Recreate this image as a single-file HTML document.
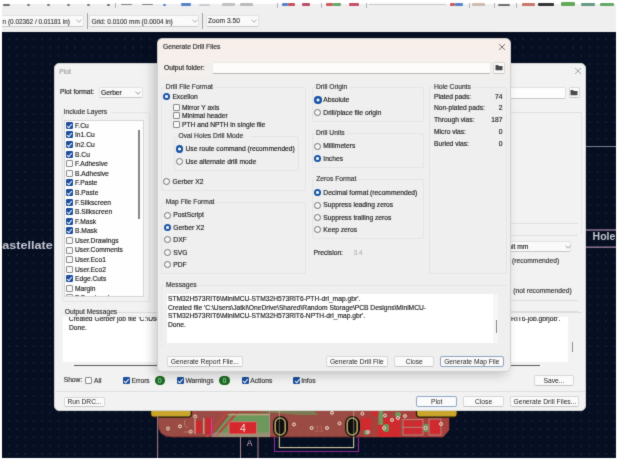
<!DOCTYPE html>
<html><head><meta charset="utf-8">
<style>
*{box-sizing:border-box}
html,body{margin:0;padding:0}
body{width:619px;height:460px;overflow:hidden;background:#fff;position:relative;font-family:"Liberation Sans",sans-serif}
.a{position:absolute}
.t{position:absolute;font-size:6.7px;line-height:7px;color:#1c1c1c;-webkit-text-stroke:0.15px currentColor;white-space:nowrap}
#tb{left:2px;top:3.5px;width:614px;height:28.5px;background:#efefef}
#cv{left:2px;top:32px;width:614px;height:426px;background-color:#050f21;
 background-image:radial-gradient(circle at 1px 1px, rgba(120,135,160,.18) 0.5px, rgba(0,0,0,0) 1.1px);
 background-size:8.31px 8.31px;background-position:5.75px 6.2px}
#plot{left:53.7px;top:62.5px;width:532.4px;height:348.7px;background:#f2f2f2;border-radius:5px;border:1px solid #d5d5d5}
#drill{left:157px;top:38px;width:353.5px;height:333.5px;background:linear-gradient(#f8eeea 0px,#f6efeb 22px,#f2efed 36px,#efefef 44px);border-radius:5px;border:1px solid #d0d0d0;box-shadow:-4px 3px 11px rgba(0,0,0,.2)}
.dd{position:absolute;background:#fafafa;border:1px solid #e2e2e2;border-bottom-color:#c8c8c8;border-radius:2px}
.btn{position:absolute;background:#fbfbfb;border:1px solid #d8d8d8;border-bottom-color:#c4c4c4;border-radius:2px;font-size:6.7px;text-align:center;color:#1e1e1e;white-space:nowrap}
.gb{position:absolute;border:1px solid #e4e4e4;border-radius:2px}
.rb{position:absolute;width:7px;height:7px;border-radius:50%;border:0.8px solid #6f6f6f;background:#f6f6f6}
.rs{position:absolute;width:7.4px;height:7.4px;border-radius:50%;background:radial-gradient(circle at 50% 50%,#f4fbff 0,#e8f6ff 1.2px,#1a52a0 1.9px,#1450a8 3.7px)}
.cb{position:absolute;width:7px;height:7px;border-radius:1px;border:0.8px solid #8a8a8a;background:#f9f9f9}
.cc{position:absolute;width:7px;height:7px;border-radius:1.2px;background:#1c4e9c}
.cc:after{content:"";position:absolute;left:2.3px;top:0.9px;width:2px;height:3.6px;border:solid #fff;border-width:0 0.9px 0.9px 0;transform:rotate(40deg)}
.badge{position:absolute;width:10.5px;height:9px;border-radius:4.5px;background:#176a20;color:#c8e8c8;font-size:7px;line-height:9px;text-align:center}
</style></head><body><svg width="0" height="0" style="position:absolute"><filter id="sb" x="0" y="0" width="100%" height="100%" color-interpolation-filters="sRGB"><feConvolveMatrix order="3" kernelMatrix="0.02 0.08 0.02 0.08 0.6 0.08 0.02 0.08 0.02" edgeMode="duplicate"/></filter></svg><div id="root" style="position:absolute;left:0;top:0;width:619px;height:460px;overflow:hidden;filter:url(#sb)">
<div id="tb" class="a"></div><div class="a" style="left:3px;top:3.5px;width:7px;height:2px;background:#555;border-radius:1px;opacity:.85"></div><div class="a" style="left:27px;top:4px;width:3px;height:1.8px;background:#666;border-radius:1px;opacity:.85"></div><div class="a" style="left:47px;top:4px;width:3px;height:1.8px;background:#666;border-radius:1px;opacity:.85"></div><div class="a" style="left:67px;top:4px;width:3px;height:1.8px;background:#666;border-radius:1px;opacity:.85"></div><div class="a" style="left:87px;top:4px;width:3px;height:1.8px;background:#666;border-radius:1px;opacity:.85"></div><div class="a" style="left:107px;top:4px;width:3px;height:1.8px;background:#555;border-radius:1px;opacity:.85"></div><div class="a" style="left:121px;top:4px;width:11px;height:1.3px;background:#6a6a6a;border-radius:1px;opacity:.85"></div><div class="a" style="left:142px;top:4px;width:11px;height:1.3px;background:#6a6a6a;border-radius:1px;opacity:.85"></div><div class="a" style="left:163px;top:3.5px;width:3px;height:2px;background:#3a6fc0;border-radius:1px;opacity:.85"></div><div class="a" style="left:181px;top:3px;width:10px;height:2.8px;background:#3a6fc0;border-radius:1px;opacity:.85"></div><div class="a" style="left:199px;top:3.5px;width:11px;height:2px;background:#c4c4d0;border-radius:1px;opacity:.85"></div><div class="a" style="left:222px;top:3px;width:13px;height:2.5px;background:#b8b8b8;border-radius:1px;opacity:.85"></div><div class="a" style="left:240px;top:3px;width:13px;height:2.5px;background:#b0b0b0;border-radius:1px;opacity:.85"></div><div class="a" style="left:282px;top:2.5px;width:6px;height:3.5px;background:#3a6fc0;border-radius:1px;opacity:.85"></div><div class="a" style="left:288px;top:2.5px;width:7px;height:3.5px;background:#c03040;border-radius:1px;opacity:.85"></div><div class="a" style="left:302px;top:2.5px;width:8px;height:3.5px;background:#b03050;border-radius:1px;opacity:.85"></div><div class="a" style="left:326px;top:2.5px;width:7px;height:3.5px;background:#c04040;border-radius:1px;opacity:.85"></div><div class="a" style="left:333px;top:2.5px;width:8px;height:3.5px;background:#4a9a50;border-radius:1px;opacity:.85"></div><div class="a" style="left:349px;top:2.5px;width:10px;height:3.5px;background:#c03050;border-radius:1px;opacity:.85"></div><div class="a" style="left:450px;top:2.5px;width:5px;height:3.5px;background:#c04040;border-radius:1px;opacity:.85"></div><div class="a" style="left:455px;top:2.5px;width:8px;height:3.5px;background:#3a6fc0;border-radius:1px;opacity:.85"></div><div class="a" style="left:472px;top:2.5px;width:13px;height:3.5px;background:#c8b0a0;border-radius:1px;opacity:.85"></div><div class="a" style="left:498px;top:3.5px;width:12px;height:2.5px;background:#555;border-radius:1px;opacity:.85"></div><div class="a" style="left:522px;top:2.5px;width:13px;height:3.5px;background:#c06050;border-radius:1px;opacity:.85"></div><div class="a" style="left:538px;top:2.8px;width:16px;height:3.6px;background:#111;border-radius:1px;opacity:.85"></div><div class="a" style="left:561px;top:2.3px;width:13.5px;height:4px;background:#4a9a40;border-radius:1px;opacity:.85"></div><div class="a" style="left:581px;top:2.5px;width:14px;height:3.8px;background:#4a8a70;border-radius:1px;opacity:.85"></div><div class="a" style="left:600px;top:2.5px;width:14px;height:3.8px;background:#4a9a50;border-radius:1px;opacity:.85"></div><div class="a" style="left:115px;top:3px;width:0.7000000000000028px;height:5px;background:#b5b5b5"></div><div class="a" style="left:276.6px;top:3px;width:0.6999999999999886px;height:5px;background:#b5b5b5"></div><div class="a" style="left:320.7px;top:3px;width:0.6999999999999886px;height:5px;background:#b5b5b5"></div><div class="a" style="left:366px;top:3px;width:0.6999999999999886px;height:5px;background:#b5b5b5"></div><div class="a" style="left:469px;top:3px;width:0.6999999999999886px;height:5px;background:#b5b5b5"></div><div class="a" style="left:493.7px;top:3px;width:0.6999999999999886px;height:5px;background:#b5b5b5"></div><div class="a" style="left:515.6px;top:3px;width:0.7000000000000455px;height:5px;background:#b5b5b5"></div><div class="a" style="left:368.5px;top:2px;width:77.5px;height:3px;background:#fbfbfb;border-bottom:1px solid #c8c8c8"></div><div class="dd" style="left:2px;top:15px;width:82.3px;height:12px;border-left:none;border-radius:0 2px 2px 0"></div><div class="t" style="left:2.6px;top:17.56px;font-size:6.4px;color:#3c3c3c">n (0.02362 / 0.01181 in)</div><svg class="a" style="left:75.7px;top:19.2px" width="6" height="4" viewBox="0 0 6 4"><path d="M0.5 0.8 L3 3.2 L5.5 0.8" fill="none" stroke="#8a8a8a" stroke-width="0.7"/></svg><div class="a" style="left:86.6px;top:13px;width:0.9000000000000057px;height:15.5px;background:#a0a0a0"></div><div class="dd" style="left:88.5px;top:15px;width:110.5px;height:12px;"></div><div class="t" style="left:91.4px;top:17.51px;font-size:6.5px;color:#3c3c3c">Grid: 0.0100 mm (0.0004 in)</div><svg class="a" style="left:191.6px;top:19.2px" width="6" height="4" viewBox="0 0 6 4"><path d="M0.5 0.8 L3 3.2 L5.5 0.8" fill="none" stroke="#8a8a8a" stroke-width="0.7"/></svg><div class="a" style="left:202px;top:13px;width:0.9000000000000057px;height:15.5px;background:#a0a0a0"></div><div class="dd" style="left:205.5px;top:15px;width:53.69999999999999px;height:12px;"></div><div class="t" style="left:208px;top:17.40px;color:#3c3c3c">Zoom 3.50</div><svg class="a" style="left:251.4px;top:19.2px" width="6" height="4" viewBox="0 0 6 4"><path d="M0.5 0.8 L3 3.2 L5.5 0.8" fill="none" stroke="#8a8a8a" stroke-width="0.7"/></svg><div id="cv" class="a"></div><svg class="a" style="left:0;top:225px" width="619" height="30" viewBox="0 225 619 30"><rect x="586" y="229.3" width="30" height="1.4" fill="#9a7a98"/><rect x="586" y="246.5" width="30" height="1.4" fill="#9a7a98"/><text x="2.3" y="248.8" font-family="Liberation Sans" font-weight="bold" font-size="11.8" fill="#c6c6d4" textLength="50.5" lengthAdjust="spacingAndGlyphs">astellate</text><text x="592.6" y="240.3" font-family="Liberation Sans" font-weight="bold" font-size="11.8" fill="#c6c6d0" textLength="22.8" lengthAdjust="spacingAndGlyphs">Hole</text></svg><svg class="a" style="left:0;top:405px" width="619" height="55" viewBox="0 405 619 55">
<path d="M158 405 H449 V430 L443 437 H172 Q158 437 158 423 Z" fill="#9a4b43"/>
<path d="M158 405 H449 V430 L443 437 H172 Q158 437 158 423 Z" fill="none" stroke="#6a2a2a" stroke-width="0.8"/>
<path d="M212 437 L231 413 H270 V437 Z" fill="#6d985c"/>
<path d="M205 437 L226 411 L229 411 L208 437 Z M214 437 L237 411 L240 411 L217 437 Z" fill="#b84840"/>
<rect x="213" y="410.8" width="57" height="2.5" fill="#a44a40"/>
<rect x="227.6" y="414" width="42" height="1.3" fill="#c0a080"/>
<path d="M250 410.8 H314 L318 415 H300 Z" fill="#6f8f58" opacity=".7"/>
<rect x="212" y="432.5" width="58" height="4.5" fill="#b88a88" opacity=".55"/>
<rect x="194.8" y="420.6" width="7" height="12.6" fill="#c82a2e"/><rect x="205.5" y="417.7" width="7.5" height="16.5" fill="#c82a2e"/><rect x="194.3" y="419" width="1.4" height="15" fill="#e0c0b0" opacity=".7"/><rect x="203" y="418" width="1.4" height="16" fill="#e0c0b0" opacity=".7"/><path d="M185 420 Q183 426 188 428 M184 432 H192" fill="none" stroke="#d09080" stroke-width=".8" opacity=".8"/>
<rect x="211" y="418" width="1.2" height="18" fill="#b050b0"/>
<rect x="229" y="421.8" width="27.7" height="12.2" rx="1.5" fill="#d5282c" stroke="#e28890" stroke-width=".7"/>
<text x="243" y="432.4" font-family="Liberation Sans" font-size="10.5" fill="#f4dede" text-anchor="middle">4</text>
<line x1="269.6" y1="405" x2="269.6" y2="437" stroke="#b09090" stroke-width=".8"/>
<rect x="150.6" y="404" width="40.7" height="13.2" rx="3.5" fill="#c9a52c" stroke="#1a1408" stroke-width="1.2"/>
<rect x="416.5" y="404" width="40.7" height="13.2" rx="3.5" fill="#c9a52c" stroke="#1a1408" stroke-width="1.2"/>
<rect x="273" y="416" width="15" height="21" rx="7.5" fill="#0e0e0e"/>
<rect x="275.2" y="418" width="10" height="17" rx="5" fill="none" stroke="#b4a060" stroke-width="1.6"/>
<rect x="345" y="416" width="15" height="21" rx="7.5" fill="#0e0e0e"/>
<rect x="347.2" y="418" width="10" height="17" rx="5" fill="none" stroke="#b4a060" stroke-width="1.6"/>
<path d="M279.3 405 V437 M353.7 405 V437" fill="none" stroke="#e6dcae" stroke-width=".8" opacity=".55"/>
<path d="M279.3 437 V447.6 H353.7 V437" fill="none" stroke="#e6dcae" stroke-width="1"/>
<path d="M274.5 437 V451.5 H358.5 V437" fill="none" stroke="#8a2a98" stroke-width="1.1"/>
<line x1="157.6" y1="416" x2="157.6" y2="458" stroke="#a67c8c" stroke-width="1"/>
<line x1="240.5" y1="437" x2="240.5" y2="458" stroke="#a67c8c" stroke-width="1"/>
<line x1="258" y1="437" x2="258" y2="458" stroke="#a67c8c" stroke-width="1"/>
<text x="249.5" y="445.5" font-family="Liberation Sans" font-size="8.5" fill="#d0a8b8" text-anchor="middle">A</text>
<text x="319" y="432" font-family="Liberation Sans" font-size="9" fill="#b86a58" text-anchor="middle">J1</text>

<path d="M360 410 H449 V430 L443 437 H360 Z" fill="#a8403c"/>
<g fill="#d02a2e">
<rect x="361" y="418" width="10" height="12" rx="1"/><rect x="378" y="418" width="22" height="19" rx="2"/>
<rect x="404" y="420.5" width="9" height="6"/><rect x="404" y="428" width="9" height="6"/>
<rect x="414" y="420.5" width="8" height="6"/><rect x="414" y="428" width="8" height="6"/>
<rect x="430" y="420" width="10" height="14" rx="1"/><rect x="372" y="410.8" width="8" height="5"/>
</g>
<g fill="#6d985c">
<rect x="378.5" y="410.8" width="4.5" height="14"/><rect x="383" y="424" width="6" height="8" rx="2.5"/><rect x="395" y="412" width="6" height="5" rx="2"/>
<rect x="423.5" y="424" width="5" height="8" rx="2"/><rect x="364" y="430" width="5" height="5" rx="2"/>
</g>
<g fill="none" stroke="#e0c0b8" stroke-width=".6" opacity=".8">
<rect x="403" y="419.5" width="20" height="15.5"/><line x1="403" y1="427.3" x2="423" y2="427.3"/><rect x="429" y="419" width="12" height="16"/>
</g>
<rect x="416.5" y="404" width="40.7" height="13.2" rx="3.5" fill="#c9a52c" stroke="#1a1408" stroke-width="1.2"/>
<g fill="#9a4b43"><circle cx="168" cy="428.5" r="1.3"/></g>
<g fill="#b0564a" stroke="#e8e2d4" stroke-width="1">
<circle cx="168" cy="428.5" r="1.5"/><circle cx="180" cy="426.3" r="1.5"/><circle cx="195.2" cy="416.4" r="1.5"/><circle cx="190.7" cy="431.7" r="1.5"/>
<circle cx="294" cy="424.4" r="1.5"/><circle cx="311.6" cy="428" r="1.5"/><circle cx="327" cy="428" r="1.5"/><circle cx="339.5" cy="423.4" r="1.5"/><circle cx="332" cy="412.8" r="1.5"/><circle cx="362.4" cy="413.7" r="1.5"/>
<circle cx="385" cy="415.5" r="1.5"/><circle cx="392" cy="420" r="1.5"/><circle cx="384" cy="428" r="1.5"/><circle cx="398" cy="418" r="1.5"/><circle cx="405" cy="416" r="1.5"/><circle cx="425.5" cy="428" r="1.5"/><circle cx="441" cy="424" r="1.5"/><circle cx="368" cy="432" r="1.5"/>
</g>
</svg><div id="plot" class="a"></div><div class="t" style="left:59.3px;top:67.60px;color:#9c9c9c">Plot</div><svg class="a" style="left:573.6px;top:67px" width="8" height="8" viewBox="0 0 8 8"><path d="M1.1 1.1 L6.9 6.9 M6.9 1.1 L1.1 6.9" fill="none" stroke="#8f8f8f" stroke-width="0.8"/></svg><div class="t" style="left:60px;top:88.40px">Plot format:</div><div class="dd" style="left:98.5px;top:87px;width:44.5px;height:11px;"></div><div class="t" style="left:101px;top:88.70px">Gerber</div><svg class="a" style="left:135px;top:90.5px" width="6" height="4" viewBox="0 0 6 4"><path d="M0.5 0.8 L3 3.2 L5.5 0.8" fill="none" stroke="#777" stroke-width="0.7"/></svg><div class="dd" style="left:158px;top:87px;width:408px;height:11.5px;background:#fdfdfd"></div><div class="btn" style="left:568.5px;top:87px;width:11.100000000000023px;height:11px;"></div><svg class="a" style="left:570.3px;top:89px" width="8" height="7" viewBox="0 0 8 7"><path d="M0.5 1 H3 L3.8 1.9 H7.5 V6.3 H0.5 Z" fill="#4a4a4a"/></svg><div class="gb" style="left:61.5px;top:112px;width:88.5px;height:189.5px;"></div><div class="a" style="left:63px;top:108px;width:48px;height:7px;background:#f2f2f2"></div><div class="t" style="left:63.7px;top:107.90px;color:#333">Include Layers</div><div class="a" style="left:64px;top:119.6px;width:80px;height:177.1px;background:#fefefe;border:1px solid #d6d6d6"></div><div class="cc" style="left:65.90px;top:121.90px"></div><div class="t" style="left:75px;top:121.80px">F.Cu</div><div class="cc" style="left:65.90px;top:131.49px"></div><div class="t" style="left:75px;top:131.39px">In1.Cu</div><div class="cc" style="left:65.90px;top:141.08px"></div><div class="t" style="left:75px;top:140.98px">In2.Cu</div><div class="cc" style="left:65.90px;top:150.67px"></div><div class="t" style="left:75px;top:150.57px">B.Cu</div><div class="cb" style="left:65.90px;top:160.26px"></div><div class="t" style="left:75px;top:160.16px">F.Adhesive</div><div class="cb" style="left:65.90px;top:169.85px"></div><div class="t" style="left:75px;top:169.75px">B.Adhesive</div><div class="cc" style="left:65.90px;top:179.44px"></div><div class="t" style="left:75px;top:179.34px">F.Paste</div><div class="cc" style="left:65.90px;top:189.03px"></div><div class="t" style="left:75px;top:188.93px">B.Paste</div><div class="cc" style="left:65.90px;top:198.62px"></div><div class="t" style="left:75px;top:198.52px">F.Silkscreen</div><div class="cc" style="left:65.90px;top:208.21px"></div><div class="t" style="left:75px;top:208.11px">B.Silkscreen</div><div class="cc" style="left:65.90px;top:217.80px"></div><div class="t" style="left:75px;top:217.70px">F.Mask</div><div class="cc" style="left:65.90px;top:227.39px"></div><div class="t" style="left:75px;top:227.29px">B.Mask</div><div class="cb" style="left:65.90px;top:236.98px"></div><div class="t" style="left:75px;top:236.88px">User.Drawings</div><div class="cb" style="left:65.90px;top:246.57px"></div><div class="t" style="left:75px;top:246.47px">User.Comments</div><div class="cb" style="left:65.90px;top:256.16px"></div><div class="t" style="left:75px;top:256.06px">User.Eco1</div><div class="cb" style="left:65.90px;top:265.75px"></div><div class="t" style="left:75px;top:265.65px">User.Eco2</div><div class="cc" style="left:65.90px;top:275.34px"></div><div class="t" style="left:75px;top:275.24px">Edge.Cuts</div><div class="cb" style="left:65.90px;top:284.93px"></div><div class="t" style="left:75px;top:284.83px">Margin</div><div class="a" style="left:65px;top:293.5px;width:60px;height:2.5px;overflow:hidden"><div class="cb" style="left:0.9px;top:0"></div><div class="t" style="left:10px;top:0">F.Courtyard</div></div><div class="a" style="left:138.2px;top:130.4px;width:1.5px;height:88.6px;background:#858585"></div><div class="a" style="left:505px;top:223.4px;width:73px;height:0.799999999999983px;background:#e0e0e0"></div><div class="a" style="left:505px;top:234.5px;width:73px;height:0.8000000000000114px;background:#e0e0e0"></div><div class="dd" style="left:470px;top:240.6px;width:101px;height:11.099999999999994px;"></div><div class="a" style="left:586px;top:145.8px;width:30px;height:1.1999999999999886px;background:#7a7f8e"></div><div class="a" style="left:505px;top:111.6px;width:76px;height:0.8000000000000114px;background:#dedede"></div><div class="a" style="left:580.6px;top:112px;width:0.7999999999999545px;height:122px;background:#e6e6e6"></div><div class="t" style="left:491.5px;top:242.60px">4.6, unit mm</div><svg class="a" style="left:564.5px;top:244.5px" width="6" height="4" viewBox="0 0 6 4"><path d="M0.5 0.8 L3 3.2 L5.5 0.8" fill="none" stroke="#777" stroke-width="0.7"/></svg><div class="t" style="left:512px;top:257.40px;color:#333">(recommended)</div><div class="t" style="left:513.3px;top:286.60px;color:#333">(not recommended)</div><div class="a" style="left:505px;top:300.3px;width:73px;height:0.8000000000000114px;background:#dcdcdc"></div><div class="a" style="left:505px;top:311.4px;width:73px;height:0.8000000000000114px;background:#dcdcdc"></div><div class="a" style="left:62px;top:312px;width:520px;height:1px;background:#dcdcdc"></div><div class="a" style="left:63px;top:308.5px;width:53px;height:7px;background:#f2f2f2"></div><div class="t" style="left:64.8px;top:308.40px;color:#333">Output Messages</div><div class="a" style="left:63.3px;top:317px;width:505px;height:45px;background:#ffffff;overflow:hidden"><div class="t" style="left:5.5px;top:-2.3px;font-size:6.7px">Created Gerber job file 'C:\Users\Jatki\OneDrive\Shared\Random Storage</div><div class="t" style="left:5.7px;top:6.8px;font-size:6.7px">Done.</div><div class="t" style="right:8px;top:-2.3px;font-size:6.7px">MiniMCU-STM32H573RIT6-job.gbrjob'.</div></div><div class="a" style="left:571.5px;top:342.3px;width:1.3999999999999773px;height:9.300000000000011px;background:#8a8a8a"></div><div class="a" style="left:73.5px;top:365.3px;width:466.5px;height:1.099999999999966px;background:#5a5a5a"></div><div class="t" style="left:63.7px;top:376.20px;color:#333">Show:</div><div class="cb" style="left:85.40px;top:376.70px"></div><div class="t" style="left:94px;top:376.60px;color:#333">All</div><div class="cc" style="left:122.80px;top:376.70px"></div><div class="t" style="left:131.5px;top:376.60px;color:#333">Errors</div><div class="badge" style="left:154.5px;top:375.7px">0</div><div class="cc" style="left:176.70px;top:376.70px"></div><div class="t" style="left:185.5px;top:376.60px;color:#333">Warnings</div><div class="badge" style="left:219.2px;top:375.7px">0</div><div class="cc" style="left:241.60px;top:376.70px"></div><div class="t" style="left:250.3px;top:376.60px;color:#333">Actions</div><div class="cc" style="left:293.30px;top:376.70px"></div><div class="t" style="left:301.2px;top:376.60px;color:#333">Infos</div><div class="btn" style="left:533.7px;top:375px;width:40.59999999999991px;height:11px;line-height:9px;">Save...</div><div class="a" style="left:54px;top:390.8px;width:531px;height:0.8000000000000114px;background:#dedede"></div><div class="btn" style="left:64px;top:396.5px;width:41px;height:10.5px;line-height:8.5px;">Run DRC...</div><div class="btn" style="left:416px;top:396.3px;width:41.39999999999998px;height:11.199999999999989px;line-height:9.199999999999989px;border-color:#8fa8c8">Plot</div><div class="btn" style="left:462.9px;top:396.3px;width:41.400000000000034px;height:11.199999999999989px;line-height:9.199999999999989px;">Close</div><div class="btn" style="left:510.4px;top:396.3px;width:69.0px;height:11.199999999999989px;line-height:9.199999999999989px;">Generate Drill Files...</div><div id="drill" class="a"></div><div class="t" style="left:163px;top:43.10px;color:#2a2a2a">Generate Drill Files</div><svg class="a" style="left:498px;top:42.8px" width="8" height="8" viewBox="0 0 8 8"><path d="M1.1 1.1 L6.9 6.9 M6.9 1.1 L1.1 6.9" fill="none" stroke="#505050" stroke-width="0.8"/></svg><div class="t" style="left:164px;top:64.40px">Output folder:</div><div class="dd" style="left:211.5px;top:62px;width:279.5px;height:11.5px;background:#fefcfa;border-color:#ece9e7;border-bottom-color:#b5b5b5"></div><div class="btn" style="left:493px;top:62px;width:11.5px;height:11.5px;"></div><svg class="a" style="left:494.8px;top:64.3px" width="8" height="7" viewBox="0 0 8 7"><path d="M0.5 1 H3 L3.8 1.9 H7.5 V6.3 H0.5 Z" fill="#4a4a4a"/></svg><div class="gb" style="left:161px;top:87px;width:144.7px;height:103.5px;"></div><div class="a" style="left:164.8px;top:83px;width:49px;height:8px;background:#efefef"></div><div class="t" style="left:165.8px;top:83.40px;color:#333">Drill File Format</div><div class="rs" style="left:163.10px;top:92.50px"></div><div class="t" style="left:172.4px;top:92.60px">Excellon</div><div class="cb" style="left:173.30px;top:103.70px"></div><div class="t" style="left:182px;top:103.60px">Mirror Y axis</div><div class="cb" style="left:173.30px;top:112.40px"></div><div class="t" style="left:182px;top:112.30px">Minimal header</div><div class="cb" style="left:173.30px;top:120.90px"></div><div class="t" style="left:182px;top:120.80px">PTH and NPTH in single file</div><div class="gb" style="left:173.8px;top:135.6px;width:125.39999999999998px;height:35.80000000000001px;"></div><div class="a" style="left:177.5px;top:131.6px;width:72px;height:8px;background:#efefef"></div><div class="t" style="left:178.5px;top:132.00px;color:#333">Oval Holes Drill Mode</div><div class="rs" style="left:176.00px;top:145.30px"></div><div class="t" style="left:185.5px;top:145.40px">Use route command (recommended)</div><div class="rb" style="left:176.20px;top:158.00px"></div><div class="t" style="left:185.5px;top:157.90px">Use alternate drill mode</div><div class="rb" style="left:163.30px;top:178.00px"></div><div class="t" style="left:172.5px;top:177.90px">Gerber X2</div><div class="gb" style="left:161px;top:201.6px;width:144.7px;height:72.4px;"></div><div class="a" style="left:164.8px;top:197.6px;width:52px;height:8px;background:#efefef"></div><div class="t" style="left:165.8px;top:198.00px;color:#333">Map File Format</div><div class="rb" style="left:163.70px;top:211.50px"></div><div class="t" style="left:173.3px;top:211.40px">PostScript</div><div class="rs" style="left:163.50px;top:223.70px"></div><div class="t" style="left:173.3px;top:223.80px">Gerber X2</div><div class="rb" style="left:163.70px;top:236.40px"></div><div class="t" style="left:173.3px;top:236.30px">DXF</div><div class="rb" style="left:163.70px;top:248.90px"></div><div class="t" style="left:173.3px;top:248.80px">SVG</div><div class="rb" style="left:163.70px;top:261.30px"></div><div class="t" style="left:173.3px;top:261.20px">PDF</div><div class="gb" style="left:311.5px;top:87px;width:112.5px;height:34.5px;"></div><div class="a" style="left:315px;top:83px;width:34px;height:8px;background:#efefef"></div><div class="t" style="left:316px;top:83.40px;color:#333">Drill Origin</div><div class="rs" style="left:314.20px;top:96.20px"></div><div class="t" style="left:323.3px;top:96.30px">Absolute</div><div class="rb" style="left:314.40px;top:108.70px"></div><div class="t" style="left:323.3px;top:108.60px">Drill/place file origin</div><div class="gb" style="left:311.5px;top:133px;width:112.5px;height:35px;"></div><div class="a" style="left:315px;top:129px;width:32px;height:8px;background:#efefef"></div><div class="t" style="left:316px;top:129.40px;color:#333">Drill Units</div><div class="rb" style="left:314.20px;top:142.50px"></div><div class="t" style="left:323.3px;top:142.40px">Millimeters</div><div class="rs" style="left:314.00px;top:154.90px"></div><div class="t" style="left:323.3px;top:155.00px">Inches</div><div class="gb" style="left:311.5px;top:179px;width:112.5px;height:60px;"></div><div class="a" style="left:315.2px;top:175px;width:42px;height:8px;background:#efefef"></div><div class="t" style="left:316.2px;top:175.40px;color:#333">Zeros Format</div><div class="rs" style="left:314.00px;top:188.60px"></div><div class="t" style="left:323.3px;top:188.70px">Decimal format (recommended)</div><div class="rb" style="left:314.20px;top:201.50px"></div><div class="t" style="left:323.3px;top:201.40px">Suppress leading zeros</div><div class="rb" style="left:314.20px;top:213.90px"></div><div class="t" style="left:323.3px;top:213.80px">Suppress trailing zeros</div><div class="rb" style="left:314.20px;top:226.10px"></div><div class="t" style="left:323.3px;top:226.00px">Keep zeros</div><div class="t" style="left:313.6px;top:249.00px">Precision:</div><div class="t" style="left:353.5px;top:249.00px;color:#b5b5b5">3.4</div><div class="gb" style="left:429.3px;top:86.6px;width:77.5px;height:187.4px;"></div><div class="a" style="left:433px;top:82.6px;width:40px;height:8px;background:#efefef"></div><div class="t" style="left:434px;top:83.00px;color:#333">Hole Counts</div><div class="t" style="left:434px;top:92.70px">Plated pads:</div><div class="t" style="left:470px;top:92.70px;width:32.5px;text-align:right">74</div><div class="t" style="left:434px;top:104.20px">Non-plated pads:</div><div class="t" style="left:470px;top:104.20px;width:32.5px;text-align:right">2</div><div class="t" style="left:434px;top:115.90px">Through vias:</div><div class="t" style="left:470px;top:115.90px;width:32.5px;text-align:right">187</div><div class="t" style="left:434px;top:127.70px">Micro vias:</div><div class="t" style="left:470px;top:127.70px;width:32.5px;text-align:right">0</div><div class="t" style="left:434px;top:139.60px">Buried vias:</div><div class="t" style="left:470px;top:139.60px;width:32.5px;text-align:right">0</div><div class="a" style="left:161px;top:285px;width:345.8px;height:1px;background:#e4e4e4"></div><div class="a" style="left:161px;top:285px;width:1px;height:62px;background:#e8e8e8"></div><div class="a" style="left:164px;top:281px;width:32px;height:8px;background:#efefef"></div><div class="t" style="left:166px;top:281.40px;color:#333">Messages</div><div class="a" style="left:166.8px;top:293.5px;width:326px;height:49.5px;background:#ffffff;overflow:hidden"><div class="t" style="left:1.2px;top:1.9px;font-size:6.7px;line-height:8.45px">STM32H573RIT6\MiniMCU-STM32H573RIT6-PTH-drl_map.gbr'.<br>Created file 'C:\Users\Jatki\OneDrive\Shared\Random Storage\PCB Designs\MiniMCU-<br>STM32H573RIT6\MiniMCU-STM32H573RIT6-NPTH-drl_map.gbr'.<br>Done.</div></div><div class="a" style="left:492.5px;top:293.5px;width:5.5px;height:49.5px;background:#f6f6f6"></div><div class="a" style="left:495.7px;top:319.5px;width:1.0px;height:13.5px;background:#858585"></div><div class="btn" style="left:166.7px;top:355.8px;width:76.30000000000001px;height:11.5px;line-height:9.5px;">Generate Report File...</div><div class="btn" style="left:325.9px;top:356.4px;width:61.900000000000034px;height:11.100000000000023px;line-height:9.100000000000023px;">Generate Drill File</div><div class="btn" style="left:394.4px;top:356.4px;width:39.80000000000001px;height:11.100000000000023px;line-height:9.100000000000023px;">Close</div><div class="btn" style="left:440px;top:356.4px;width:63.69999999999999px;height:11.100000000000023px;line-height:9.100000000000023px;border-color:#8ea3bf">Generate Map File</div></div></body></html>
